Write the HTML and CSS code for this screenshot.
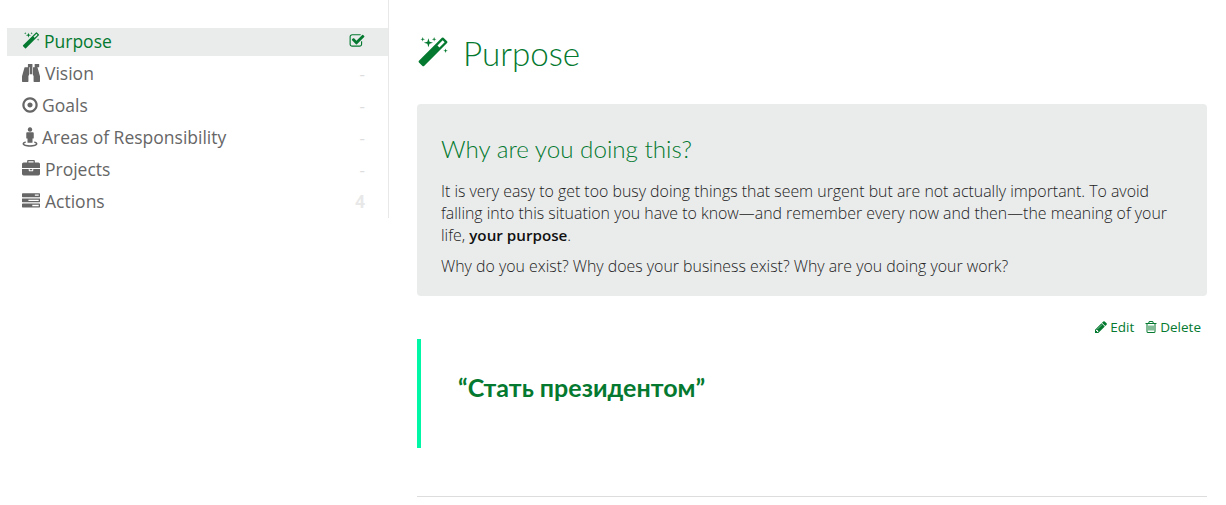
FILE: index.html
```html
<!DOCTYPE html>
<html lang="en">
<head>
    <meta charset="UTF-8">
    <title>Purpose</title>
    <link rel="stylesheet" href="styles.css">
</head>
<body>
    <svg class="defs" width="0" height="0">
        <symbol id="i-magic" viewBox="0 0 1792 1792"><path d="M1254 581l293-293-107-107-293 293zm447-293q0 27-18 45l-1286 1286q-18 18-45 18t-45-18l-198-198q-18-18-18-45t18-45l1286-1286q18-18 45-18t45 18l198 198q18 18 18 45zm-1351-190l98 30-98 30-30 98-30-98-98-30 98-30 30-98zm350 162l196 60-196 60-60 196-60-196-196-60 196-60 60-196zm930 478l98 30-98 30-30 98-30-98-98-30 98-30 30-98zm-640-640l98 30-98 30-30 98-30-98-98-30 98-30 30-98z"/></symbol>
        <symbol id="i-binoculars" viewBox="0 0 1792 1792"><path d="M704 320v768q0 26-19 45t-45 19v576q0 26-19 45t-45 19h-512q-26 0-45-19t-19-45v-512l249-873q7-23 31-23h424zm320 0v704h-256v-704h256zm768 896v512q0 26-19 45t-45 19h-512q-26 0-45-19t-19-45v-576q-26 0-45-19t-19-45v-768h424q24 0 31 23zm-754-1184v288h-448v-288q0-14 9-23t23-9h384q14 0 23 9t9 23zm672 0v288h-448v-288q0-14 9-23t23-9h384q14 0 23 9t9 23z"/></symbol>
        <symbol id="i-dot" viewBox="0 0 1792 1792"><path d="M1152 896q0 106-75 181t-181 75-181-75-75-181 75-181 181-75 181 75 75 181zm-256-544q-148 0-273 73t-198 198-73 273 73 273 198 198 273 73 273-73 198-198 73-273-73-273-198-198-273-73zm768 544q0 209-103 385.500t-279.500 279.500-385.500 103-385.500-103-279.500-279.500-103-385.500 103-385.500 279.500-279.500 385.500-103 385.500 103 279.500 279.500 103 385.500z"/></symbol>
        <symbol id="i-street" viewBox="0 0 1792 1792"><path d="M896 30a200 200 0 1 1-.1 0zM640 480h512q80 0 80 80v420q0 50-50 50h-62v340q0 50-50 50H722q-50 0-50-50V1030h-60q-50 0-50-50V560q0-80 78-80zM520 1290v120c-100 20-150 50-150 90 0 70 230 130 526 130s526-60 526-130c0-40-50-70-150-90v-120c190 30 290 100 290 210 0 160-300 270-666 270s-666-110-666-270c0-110 100-180 290-210z"/></symbol>
        <symbol id="i-briefcase" viewBox="0 0 1792 1792"><path d="M640 256h512v-128h-512v128zm1152 640v480q0 66-47 113t-113 47h-1472q-66 0-113-47t-47-113v-480h672v160q0 26 19 45t45 19h320q26 0 45-19t19-45v-160h672zm-768 0v128h-256v-128h256zm768-480v384h-1792v-384q0-66 47-113t113-47h352v-160q0-40 28-68t68-28h576q40 0 68 28t28 68v160h352q66 0 113 47t47 113z"/></symbol>
        <symbol id="i-tasks" viewBox="0 0 1792 1792"><path d="M1024 1408h640v-128h-640v128zm-384-512h1024v-128h-1024v128zm640-512h384v-128h-384v128zm512 832v256q0 26-19 45t-45 19h-1664q-26 0-45-19t-19-45v-256q0-26 19-45t45-19h1664q26 0 45 19t19 45zm0-512v256q0 26-19 45t-45 19h-1664q-26 0-45-19t-19-45v-256q0-26 19-45t45-19h1664q26 0 45 19t19 45zm0-512v256q0 26-19 45t-45 19h-1664q-26 0-45-19t-19-45v-256q0-26 19-45t45-19h1664q26 0 45 19t19 45z"/></symbol>
        <symbol id="i-check" viewBox="0 0 1792 1792"><path d="M1472 930v318q0 119-84.500 203.500t-203.500 84.500h-832q-119 0-203.500-84.500t-84.500-203.500v-832q0-119 84.500-203.500t203.500-84.500h832q63 0 117 25 15 7 18 23 3 17-9 29l-49 49q-10 10-23 10-3 0-9-2-23-6-45-6h-832q-66 0-113 47t-47 113v832q0 66 47 113t113 47h832q66 0 113-47t47-113v-254q0-13 9-22l64-64q10-10 23-10 6 0 12 3 20 8 20 29zm231-489l-814 814q-24 24-57 24t-57-24l-430-430q-24-24-24-57t24-57l110-110q24-24 57-24t57 24l263 263 647-647q24-24 57-24t57 24l110 110q24 24 24 57t-24 57z"/></symbol>
        <symbol id="i-pencil" viewBox="0 0 1792 1792"><path d="M491 1536l91-91-235-235-91 91v107h128v128h107zm523-928q0-22-22-22-10 0-17 7l-542 542q-7 7-7 17 0 22 22 22 10 0 17-7l542-542q7-7 7-17zm-54-192l416 416-832 832h-416v-416zm683 96q0 53-37 90l-166 166-416-416 166-165q36-38 90-38 53 0 91 38l235 234q37 39 37 91z"/></symbol>
        <symbol id="i-trash" viewBox="0 0 1792 1792"><path d="M704 736v576q0 14-9 23t-23 9h-64q-14 0-23-9t-9-23v-576q0-14 9-23t23-9h64q14 0 23 9t9 23zm256 0v576q0 14-9 23t-23 9h-64q-14 0-23-9t-9-23v-576q0-14 9-23t23-9h64q14 0 23 9t9 23zm256 0v576q0 14-9 23t-23 9h-64q-14 0-23-9t-9-23v-576q0-14 9-23t23-9h64q14 0 23 9t9 23zm128 724v-948h-896v948q0 22 7 40.500t14.500 27 10.500 8.500h832q3 0 10.500-8.500t14.500-27 7-40.500zm-672-1076h448l-48-117q-7-9-17-11h-317q-10 2-17 11zm928 32v64q0 14-9 23t-23 9h-96v948q0 83-47 143.500t-113 60.500h-832q-66 0-113-58.500t-47-141.500v-952h-96q-14 0-23-9t-9-23v-64q0-14 9-23t23-9h309l70-167q15-37 54-63t79-26h320q40 0 79 26t54 63l70 167h309q14 0 23 9t9 23z"/></symbol>
    </svg>

    <div class="page">
        <!-- Sidebar -->
        <nav class="sidebar">
            <a class="nav-item active">
                <span class="nav-label"><svg class="icon icon-magic"><use href="#i-magic"/></svg>Purpose</span>
                <svg class="nav-check"><use href="#i-check"/></svg>
            </a>
            <a class="nav-item">
                <span class="nav-label"><svg class="icon"><use href="#i-binoculars"/></svg>Vision</span>
                <span class="nav-count">-</span>
            </a>
            <a class="nav-item">
                <span class="nav-label"><svg class="icon icon-dot"><use href="#i-dot"/></svg>Goals</span>
                <span class="nav-count">-</span>
            </a>
            <a class="nav-item">
                <span class="nav-label"><svg class="icon icon-street"><use href="#i-street"/></svg>Areas of Responsibility</span>
                <span class="nav-count">-</span>
            </a>
            <a class="nav-item">
                <span class="nav-label"><svg class="icon"><use href="#i-briefcase"/></svg>Projects</span>
                <span class="nav-count">-</span>
            </a>
            <a class="nav-item">
                <span class="nav-label"><svg class="icon"><use href="#i-tasks"/></svg>Actions</span>
                <span class="nav-count nav-count-num">4</span>
            </a>
        </nav>

        <!-- Main content -->
        <main class="content">
            <h1 class="title"><svg class="title-icon"><use href="#i-magic"/></svg>Purpose</h1>

            <section class="intro">
                <h2>Why are you doing this?</h2>
                <p>It is very easy to get too busy doing things that seem urgent but are not actually important. To avoid falling into this situation you have to know—and remember every now and then—the meaning of your life, <strong>your purpose</strong>.</p>
                <p>Why do you exist? Why does your business exist? Why are you doing your work?</p>
            </section>

            <div class="actions">
                <a><svg class="action-icon"><use href="#i-pencil"/></svg>Edit</a>
                <a><svg class="action-icon"><use href="#i-trash"/></svg>Delete</a>
            </div>

            <blockquote class="quote">“Стать президентом”</blockquote>

            <hr class="divider">
        </main>
    </div>
</body>
</html>
```

FILE: styles.css
```css
/* Page */
body {
    margin: 0;
    font-family: "Open Sans", "Noto Sans", sans-serif;
    background-color: #fff;
    color: #222;
    overflow: hidden;
}

.defs {
    position: absolute;
}

.page {
    display: flex;
    align-items: flex-start;
}

/* Sidebar */
.sidebar {
    width: 381px;
    margin-left: 7px;
    padding: 28px 0 0;
    height: 190px;
    border-right: 1px solid #e8e8e8;
    display: flex;
    flex-direction: column;
    gap: 4px;
}

.nav-item {
    display: flex;
    justify-content: space-between;
    align-items: center;
    height: 28px;
    padding: 0 23px 2px 15px;
    box-sizing: border-box;
    font-size: 17.5px;
    color: #666;
}

.nav-item.active {
    background-color: #eaecec;
    color: #04792f;
}

.nav-label {
    display: flex;
    align-items: center;
}

.icon {
    width: 18px;
    height: 18px;
    margin-right: 5px;
    fill: currentColor;
}

.icon-magic {
    margin-right: 4px;
}

.icon-dot {
    margin: 0 3px 0 -1px;
}

.icon-street {
    width: 20px;
    height: 20px;
    margin: 0 2px 0 -2px;
}

.nav-check {
    width: 16px;
    height: 16px;
    fill: currentColor;
}

.nav-count {
    color: #ddd;
    font-size: 17px;
}

.nav-count-num {
    font-weight: 700;
    color: #e8e8e8;
}

/* Main content */
.content {
    width: 790px;
    margin-left: 28px;
}

.title {
    display: flex;
    align-items: center;
    margin: 0;
    height: 104px;
    padding-top: 2px;
    box-sizing: border-box;
    font-family: Lato, sans-serif;
    font-weight: 300;
    font-size: 33.2px;
    color: #04792f;
}

.title-icon {
    width: 32px;
    height: 32px;
    margin-right: 14px;
    fill: currentColor;
}

.intro {
    background-color: #eaecec;
    border-radius: 4px;
    padding: 31px 24px 12px;
    height: 192px;
    box-sizing: border-box;
    font-size: 15.9px;
    line-height: 22px;
    font-weight: 300;
}

.intro h2 {
    margin: 0 0 17px;
    font-family: Lato, sans-serif;
    font-weight: 300;
    font-size: 24.2px;
    line-height: 28px;
    color: #04792f;
}

.intro p {
    margin: 0 0 9px;
}

.intro strong {
    font-weight: 600;
    font-size: 15.2px;
    color: #111;
}

.actions {
    display: flex;
    justify-content: flex-end;
    gap: 10px;
    height: 43px;
    padding: 22px 6px 0 0;
    box-sizing: border-box;
    font-size: 13.5px;
    line-height: 18px;
    color: #04792f;
}

.action-icon {
    width: 14px;
    height: 14px;
    margin-right: 2px;
    vertical-align: -2px;
    fill: currentColor;
}

.quote {
    margin: 0;
    height: 109px;
    box-sizing: border-box;
    padding: 32px 0 0 37px;
    border-left: 4px solid #00f7a5;
    font-family: Lato, sans-serif;
    font-weight: 700;
    font-size: 25px;
    line-height: 32px;
    color: #04792f;
}

.divider {
    margin: 48px 0 0;
    border: 0;
    border-top: 1px solid #ddd;
}
```
